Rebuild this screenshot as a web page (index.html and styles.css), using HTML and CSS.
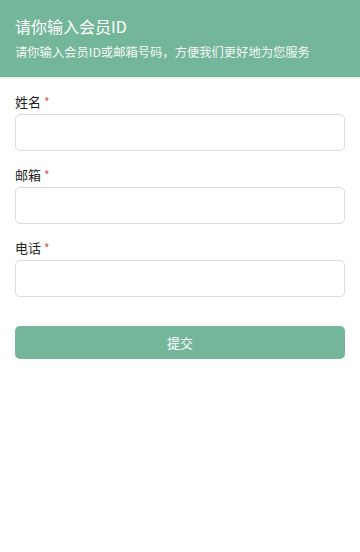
FILE: index.html
```html
<!DOCTYPE html>
<html lang="zh-CN">
<head>
  <meta charset="UTF-8" />
  <meta name="viewport" content="width=device-width, initial-scale=1.0"/>
  <title>会员信息</title>
  <link rel="stylesheet" href="styles.css">
</head>
<body>
  <div class="header">
    <h2>请你输入会员ID</h2>
    <p>请你输入会员ID或邮箱号码，方便我们更好地为您服务</p>
  </div>

  <form class="form" action="#" method="post">
    <div class="field">
      <label>姓名 <span class="req">*</span></label>
      <input type="text" name="name">
    </div>
    <div class="field">
      <label>邮箱 <span class="req">*</span></label>
      <input type="text" name="email">
    </div>
    <div class="field">
      <label>电话 <span class="req">*</span></label>
      <input type="text" name="phone">
    </div>
    <button type="submit" class="submit">提交</button>
  </form>
</body>
</html>
```

FILE: styles.css
```css
body {
  margin: 0;
  font-family: "Noto Sans CJK SC", "Noto Sans", sans-serif;
  background-color: #fff;
  color: #333;
}
.header {
  background-color: #74b69a;
  color: #fff;
  padding: 14px 15px 15px;
  height: 48px;
  box-shadow: 0 1px 2px rgba(0, 0, 0, 0.12);
}
.header h2 {
  margin: 0;
  font-size: 16px;
  font-weight: normal;
  line-height: 24px;
}
.header p {
  margin: 5px 0 0;
  font-size: 12.3px;
  line-height: 19px;
  opacity: 0.92;
}
.form {
  padding: 15px 15px 0;
}
.field {
  margin-bottom: 14px;
}
.field label {
  display: block;
  font-size: 13px;
  line-height: 20px;
  margin-bottom: 2px;
  color: #222;
}
.req {
  color: #d9534f;
  font-size: 12px;
}
.field input {
  display: block;
  box-sizing: border-box;
  width: 100%;
  height: 37px;
  border: 1px solid #dcdcdc;
  border-radius: 5px;
  padding: 0 10px;
  font-size: 13px;
  outline: none;
}
.submit {
  display: block;
  width: 100%;
  height: 33px;
  margin-top: 29px;
  border: none;
  border-radius: 5px;
  background-color: #74b69a;
  color: #fff;
  font-family: inherit;
  font-size: 13px;
}
```
